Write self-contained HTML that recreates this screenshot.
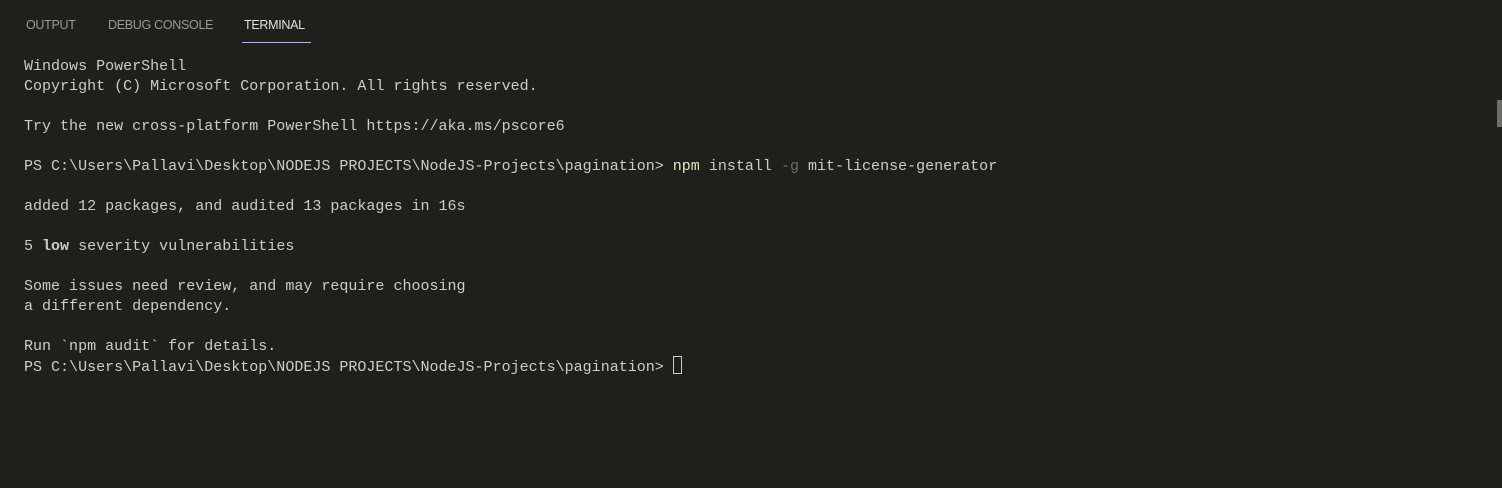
<!DOCTYPE html><html><head><style>
body{margin:0;width:1502px;height:488px;background:#1f1f1b;overflow:hidden;position:relative;font-family:"Liberation Sans",sans-serif}
.tab{position:absolute;top:18px;font-size:12.5px;color:#9a9a94;letter-spacing:-0.3px}
.term{position:absolute;left:24px;top:56px;font-family:"Liberation Mono",monospace;font-size:15.03px;line-height:20px;color:#cccccc;white-space:pre}
.dim{color:#6f6f6a}
.cur{display:inline-block;width:7px;height:16px;border:1px solid #ccc;vertical-align:-3px}
</style></head><body>
<div class="tab" style="left:26px">OUTPUT</div>
<div class="tab" style="left:108px">DEBUG CONSOLE</div>
<div class="tab" style="left:244px;color:#e0e0e0">TERMINAL</div>
<div style="position:absolute;left:242px;top:42px;width:69px;height:1px;background:#b8b8d8"></div>
<div style="position:absolute;left:1497px;top:100px;width:5px;height:27px;background:#6e6e6a"></div>
<div class="term">Windows PowerShell
Copyright (C) Microsoft Corporation. All rights reserved.

Try the new cross-platform PowerShell https://aka.ms/pscore6

PS C:\Users\Pallavi\Desktop\NODEJS PROJECTS\NodeJS-Projects\pagination> <span style="color:#e8e8c0">npm</span> install <span class="dim">-g</span> mit-license-generator

added 12 packages, and audited 13 packages in 16s

5 <b>low</b> severity vulnerabilities

Some issues need review, and may require choosing
a different dependency.

Run `npm audit` for details.
PS C:\Users\Pallavi\Desktop\NODEJS PROJECTS\NodeJS-Projects\pagination> <span class="cur"></span></div>
</body></html>
